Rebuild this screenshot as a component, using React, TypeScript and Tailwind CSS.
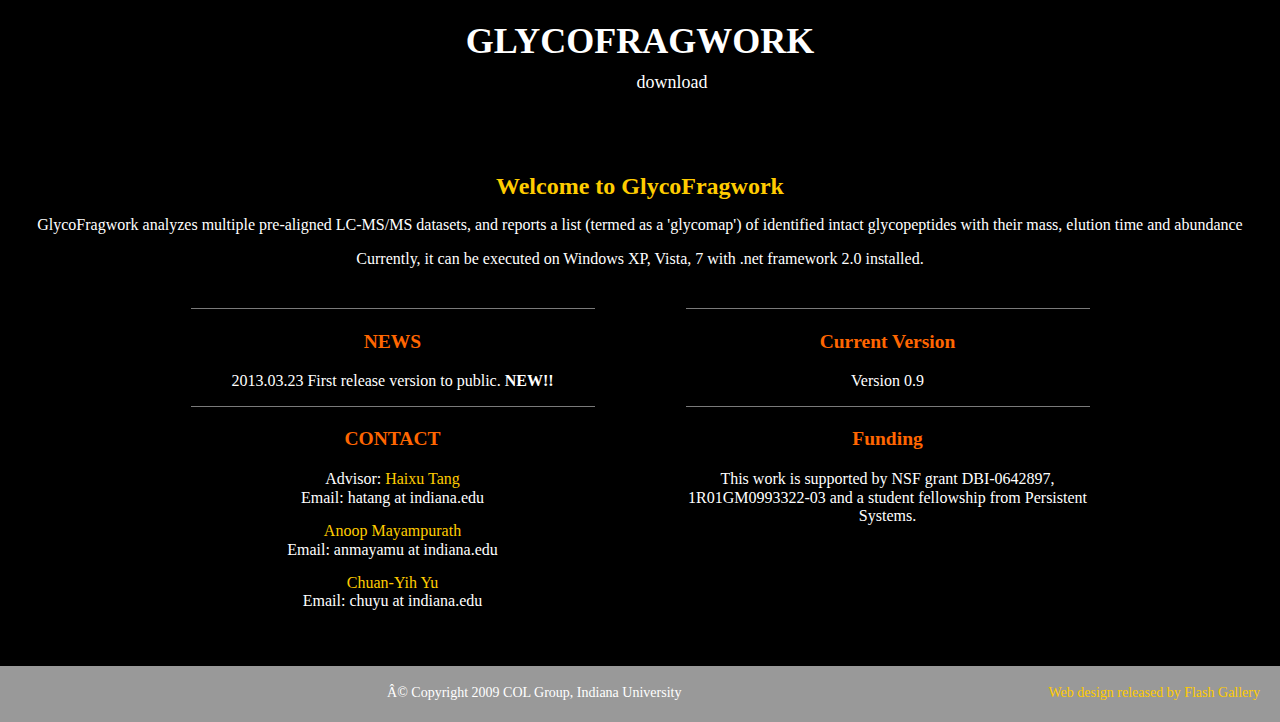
export default function App() {
  return (
    <div className="min-h-screen bg-black text-white font-['Liberation_Serif','Times_New_Roman',serif] flex flex-col">
      {/* Header */}
      <header className="text-center">
        <h1 className="mt-[21px] text-[36px] leading-[41px] font-bold">GLYCOFRAGWORK</h1>
        <nav className="mt-[9px] pl-[64px]">
          <a href="#" className="text-[18px] leading-[21px] text-white">
            download
          </a>
        </nav>
      </header>

      {/* Intro */}
      <section className="mt-[77px] text-center">
        <h2 className="text-[24px] leading-[28px] font-bold text-[#ffcc00]">Welcome to GlycoFragwork</h2>
        <p className="mt-4 text-[16px] leading-[18px]">
          GlycoFragwork analyzes multiple pre-aligned LC-MS/MS datasets, and reports a list (termed as a 'glycomap') of
          identified intact glycopeptides with their mass, elution time and abundance
        </p>
        <p className="mt-4 text-[16px] leading-[18px]">
          Currently, it can be executed on Windows XP, Vista, 7 with .net framework 2.0 installed.
        </p>
      </section>

      {/* Columns */}
      <div className="mt-[40px] mb-[55px] grid grid-cols-[404px_404px] justify-center gap-x-[91px] text-center text-[16px] leading-[18.4px]">
        <div>
          <hr className="border-t border-[#7a7a7a]" />
          <h3 className="mt-[22px] text-[19.5px] leading-[22px] font-bold text-[#ff6600]">NEWS</h3>
          <p className="mt-[19px] mb-4">
            2013.03.23 First release version to public. <b>NEW!!</b>
          </p>
          <hr className="border-t border-[#7a7a7a]" />
          <h3 className="mt-[21px] text-[19.5px] leading-[22px] font-bold text-[#ff6600]">CONTACT</h3>
          <p className="mt-5">
            Advisor: <a href="#" className="text-[#ffcc00]">Haixu Tang</a>
            <br />
            Email: hatang at indiana.edu
          </p>
          <p className="mt-[15px]">
            <a href="#" className="text-[#ffcc00]">Anoop Mayampurath</a>
            <br />
            Email: anmayamu at indiana.edu
          </p>
          <p className="mt-[15px]">
            <a href="#" className="text-[#ffcc00]">Chuan-Yih Yu</a>
            <br />
            Email: chuyu at indiana.edu
          </p>
        </div>
        <div>
          <hr className="border-t border-[#7a7a7a]" />
          <h3 className="mt-[22px] text-[19.5px] leading-[22px] font-bold text-[#ff6600]">Current Version</h3>
          <p className="mt-[19px] mb-4">Version 0.9</p>
          <hr className="border-t border-[#7a7a7a]" />
          <h3 className="mt-[21px] text-[19.5px] leading-[22px] font-bold text-[#ff6600]">Funding</h3>
          <p className="mt-5">
            This work is supported by NSF grant DBI-0642897, 1R01GM0993322-03 and a student fellowship from Persistent
            Systems.
          </p>
        </div>
      </div>

      {/* Footer */}
      <footer className="mt-auto bg-[#999999] flex pt-[19px] pb-[24px] text-[14px] leading-[16px]">
        <div className="flex-1 pl-5 text-center text-white">Â© Copyright 2009 COL Group, Indiana University</div>
        <div className="pr-5">
          <a href="#" className="text-[#ffcc00]">
            Web design released by Flash Gallery
          </a>
        </div>
      </footer>
    </div>
  )
}
